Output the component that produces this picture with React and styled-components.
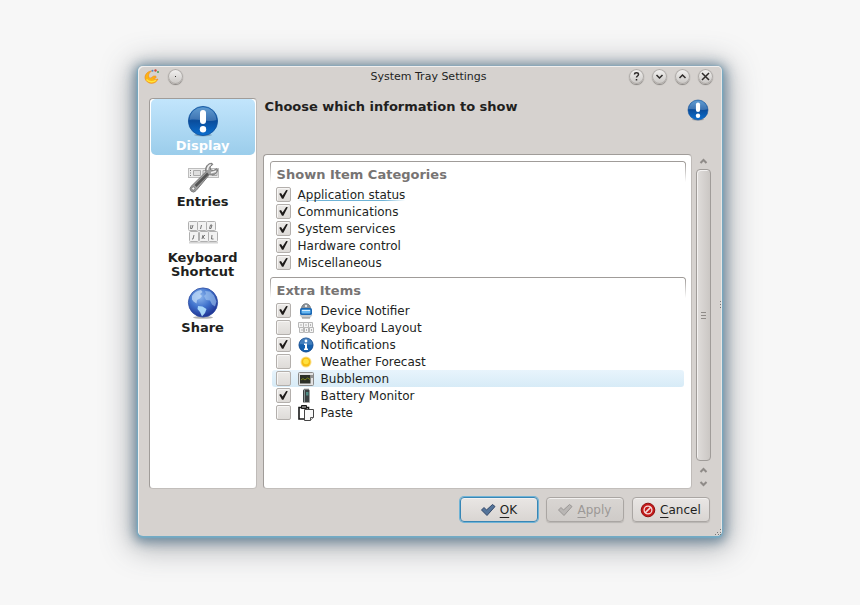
import React, {useState} from 'react';
import styled, {createGlobalStyle, css} from 'styled-components';

const windowColor = '#d6d2cf';
const textColor = '#221f1e';
const accentColor = '#6fb3d6';
const lineColor = '#a09c99';

const categories = [
  {id: 'status', label: 'Application status', checked: true, isFocused: true},
  {id: 'communications', label: 'Communications', checked: true},
  {id: 'services', label: 'System services', checked: true},
  {id: 'hardware', label: 'Hardware control', checked: true},
  {id: 'misc', label: 'Miscellaneous', checked: true}
];

// icons
const AlertIcon = ({size, id}) => (
  <svg width={size} height={size} viewBox="0 0 32 32" aria-hidden="true">
    <defs>
      <linearGradient id={id} x1="0" y1="0" x2="0" y2="1">
        <stop offset="0" stopColor="#3c86c8" />
        <stop offset="0.5" stopColor="#0a4d9c" />
        <stop offset="1" stopColor="#0b6fd0" />
      </linearGradient>
    </defs>
    <ellipse cx="16" cy="30" rx="9" ry="1.4" fill="#000" opacity="0.2" />
    <circle cx="16" cy="16" r="14.6" fill={`url(#${id})`} stroke="#0f4f9a" strokeWidth="0.8" />
    <path d="M2.500 15C3 7 9 2.400 16 2.400S29 7 29.500 15C21 18 11 13 2.500 15z" fill="#fff" opacity="0.2" />
    <rect x="13" y="5" width="6" height="14" rx="3" fill="#fff" />
    <circle cx="16" cy="24.300" r="3.200" fill="#fff" />
  </svg>
);

const WrenchIcon = () => (
  <svg width="32" height="32" viewBox="0 0 32 32" aria-hidden="true">
    <rect x="1.500" y="7.500" width="30" height="9" fill="#ececec" stroke="#bdbdbd" />
    <path d="M3 9.500h1M3 12h1M3 14.500h1" stroke="#777" />
    <path d="M6.500 9.500h7v5h-7zM16 9.500h4v5h-4zM27 9.500h3v5h-5" fill="#dedede" stroke="#aaa" />
    <path d="M4.300 30.300a3.400 3.400 0 0 1-.3-4.800L19 10.700c-1.300-4.500 1.400-8.400 6-8.400l.8 1.200-2.800 2.300.6 3 2.900.8 3.200-1.900.9 1.200c-.5 3.900-4.500 6-8.100 4.700L9 29.600a3.400 3.400 0 0 1-4.700.7z" fill="#a0a0a0" stroke="#777" />
    <path d="M8.500 25L21 12.500" stroke="#555" strokeWidth="2.600" />
    <path d="M20.500 9c0-2.500 1.300-4.300 3.300-5.300M24 11.700l5-1.500" fill="none" stroke="#f1f1f1" strokeWidth="1.500" />
    <circle cx="6.300" cy="27.500" r="1.600" fill="#f3f3f3" stroke="#666" strokeWidth="0.700" />
  </svg>
);

const KeysIcon = () => (
  <svg width="32" height="32" viewBox="0 0 32 32" aria-hidden="true">
    <path d="M2 25h29v1.500H2z" fill="#aaa" opacity="0.500" />
    <g fill="#f2f2f2" stroke="#b0b0b0">
      <rect x="1.500" y="4.500" width="9" height="9" rx="1" />
      <rect x="10.500" y="4.500" width="9" height="9" rx="1" />
      <rect x="19.500" y="4.500" width="9" height="9" rx="1" />
      <rect x="2.500" y="14.500" width="9" height="10" rx="1" />
      <rect x="12.500" y="14.500" width="9" height="10" rx="1" />
      <rect x="21.500" y="14.500" width="9" height="10" rx="1" />
    </g>
    <g fill="none" stroke="#666" strokeWidth="0.900">
      <path d="M4 8l-.5 3.500h1.500L6 8M14.500 8l-1 4M22.500 11.500l1-3.500h1.500l-1 3.500z" />
      <path d="M7 18l-1 4H5M16 18l-1 4M18 18l-2 2 1.500 2M25 18l-.5 4h2" />
    </g>
  </svg>
);

const GlobeIcon = () => (
  <svg width="32" height="32" viewBox="0 0 32 32" aria-hidden="true">
    <defs>
      <radialGradient id="globe" cx="0.400" cy="0.300" r="0.750">
        <stop offset="0" stopColor="#8fb8ee" />
        <stop offset="0.500" stopColor="#3f72cc" />
        <stop offset="1" stopColor="#1a2a8c" />
      </radialGradient>
    </defs>
    <ellipse cx="16" cy="30.500" rx="10" ry="1.300" fill="#000" opacity="0.300" />
    <circle cx="16" cy="15.500" r="14.600" fill="url(#globe)" stroke="#2c4aa0" strokeWidth="0.800" />
    <path d="M5 9c2-3.500 5-5.500 9-6l1.500 2-2.500 2 2 2-2 2.500-3 1.500-.5 3.500-3-2-1.500-2z" fill="#c2dbf7" opacity="0.750" />
    <path d="M18 4l5 .5 4 4 2.500 6-1.500 5-3-2-2-4-4-.5-2-4 2-2z" fill="#a5c8f2" opacity="0.600" />
    <path d="M11 19l4.500.5 4 2.500-1.500 4-3 3.500-2-4.500-2.500-3z" fill="#b4e2ff" opacity="0.900" />
  </svg>
);

const CheckMark = () => (
  <svg width="15" height="15" viewBox="0 0 15 15" aria-hidden="true">
    <path d="M3.200 6.800l1.800-.8 1.600 2.600L10.200 3l1.600.2-4.400 8.600H6z" fill="#1e1b1a" />
  </svg>
);

const DeviceIcon = () => (
  <svg width="16" height="16" viewBox="0 0 16 16" aria-hidden="true">
    <path d="M3.500 5.500a4.500 4.800 0 0 1 9 0z" fill="#8b9197" stroke="#7d848a" />
    <circle cx="8" cy="3" r="1.200" fill="#e8ecef" />
    <rect x="2" y="5" width="12" height="7" rx="1.500" fill="#1c68b4" />
    <rect x="3.500" y="6.500" width="9" height="4" rx="1" fill="#67b8f2" />
    <path d="M4 7.500h8" stroke="#d5edff" />
    <path d="M1.500 12h13L12 15H4z" fill="#c9cbcd" />
    <path d="M4 15h8" stroke="#888" />
  </svg>
);

const LayoutIcon = () => (
  <svg width="16" height="16" viewBox="0 0 16 16" aria-hidden="true">
    <g fill="#f4f4f4" stroke="#b8b8b8">
      <path d="M.5 2.500h5v5h-5zM5.500 2.500h5v5h-5zM10.500 2.500h4v5h-4z" />
      <path d="M1.500 7.500h4v5h-4zM6.500 7.500h4v5h-4zM11.500 7.500h4v5h-4z" />
    </g>
    <path d="M3 4v2M8 4v2M12.500 4v2M4 9v2M8.500 9v2M13.500 9v2" stroke="#999" strokeWidth="0.700" />
  </svg>
);

const InfoIcon = () => (
  <svg width="16" height="16" viewBox="0 0 16 16" aria-hidden="true">
    <circle cx="8" cy="8" r="7" fill="#1560ad" stroke="#0f4a92" />
    <path d="M1.500 7.500a6.500 6.500 0 0 1 13 0c-4 1.200-9-1-13 0z" fill="#fff" opacity="0.200" />
    <circle cx="8" cy="4" r="1.400" fill="#fff" />
    <path d="M6 6.500h3v5h1V13H6v-1.500h1V8H6z" fill="#fff" />
  </svg>
);

const WeatherIcon = () => (
  <svg width="16" height="16" viewBox="0 0 16 16" aria-hidden="true">
    <circle cx="8" cy="8" r="5.500" fill="#fbe08a" />
    <circle cx="8" cy="8" r="4.500" fill="#f6bd12" />
    <circle cx="8" cy="7.500" r="2.800" fill="#ffe13e" />
  </svg>
);

const BubbleIcon = () => (
  <svg width="16" height="16" viewBox="0 0 16 16" aria-hidden="true">
    <rect x="0.500" y="1.500" width="15" height="13" rx="1" fill="#e2e2e2" stroke="#8a8a8a" />
    <rect x="2" y="4" width="10.500" height="8.500" fill="#2c3028" />
    <path d="M3 9l2-1.500L7 9l2.500-2L12 8.500" fill="none" stroke="#7b8518" />
    <path d="M14 4v3" stroke="#444" />
  </svg>
);

const BatteryIcon = () => (
  <svg width="16" height="16" viewBox="0 0 16 16" aria-hidden="true">
    <rect x="6" y="0.500" width="5" height="2" fill="#bbb" />
    <rect x="5" y="1.500" width="6.500" height="13.500" rx="1" fill="#3a4042" />
    <path d="M6.500 2v12" stroke="#8b9798" />
    <path d="M8 4h2.500v3.500H8z" fill="#4d8a83" />
    <path d="M5 14.500h6.500" stroke="#aaa" />
  </svg>
);

const PasteIcon = () => (
  <svg width="16" height="16" viewBox="0 0 16 16" aria-hidden="true">
    <path d="M1 2.500h9.500V14H1z" fill="#fff" stroke="#171717" strokeWidth="1.600" />
    <path d="M3.500.5h5v3h-5z" fill="#777" stroke="#171717" />
    <path d="M6.500 4.500h9v8l-3 3h-6z" fill="#f9f9f9" stroke="#444" />
    <path d="M15.500 12.500h-3v3" fill="#ddd" stroke="#555" />
  </svg>
);

const TickIcon = ({fill, stroke}) => (
  <svg width="16" height="16" viewBox="0 0 16 16" aria-hidden="true">
    <path d="M1.500 8l2.500-2.500L6.500 8 12.500 2.500 15 4.500 7 13.500z" fill={fill} stroke={stroke} strokeLinejoin="round" />
  </svg>
);

const CancelIcon = () => (
  <svg width="16" height="16" viewBox="0 0 16 16" aria-hidden="true">
    <circle cx="8" cy="8" r="6.800" fill="#c41a1a" stroke="#8f1010" />
    <circle cx="8" cy="8" r="3.900" fill="none" stroke="#f4dcdc" strokeWidth="1.300" />
    <path d="M5 11l6-6" stroke="#f4dcdc" strokeWidth="1.700" />
  </svg>
);

const AppIcon = () => (
  <svg width="16" height="16" viewBox="0 0 16 16" aria-hidden="true">
    <path d="M7.500 2C2 2.500-.5 8 2 11.500c3 4 9.500 4 12-1.500-2.500 1-4 .5-4.200-1 2.500.8 3.200-1.500 1.500-2C8 6.500 8 10 5.500 9 3.800 7.500 4.500 4 7.500 2z" fill="#fdb414" stroke="#f08b1a" strokeWidth="0.700" />
    <path d="M2.500 10.500c2.500 3 7 3 9.500.5" fill="none" stroke="#ffe53d" strokeWidth="1.400" />
    <circle cx="8.500" cy="1.800" r="1" fill="#4d86c9" />
    <circle cx="11.500" cy="1.500" r="1.200" fill="#d14b39" />
    <circle cx="14" cy="3" r="1" fill="#4aa05a" />
  </svg>
);

const Arrow = ({isDown}) => (
  <svg width="15" height="13" viewBox="0 0 15 13" aria-hidden="true">
    <path d={isDown ? 'M4.500 6l3 3 3-3' : 'M4.500 9l3-3 3 3'} fill="none" stroke="#8f8b88" strokeWidth="2" />
  </svg>
);

const glyphs = {
  menu: <path d="M7.500 7v1" strokeWidth="1" />,
  help: <path d="M5.500 5.500c0-2.300 4-2.300 4 0 0 1.500-2 1.500-2 3M7.500 10v1.400" />,
  shade: <path d="M4.500 6l3 3 3-3" />,
  grow: <path d="M4.500 9l3-3 3 3" />,
  close: <path d="M4 4l7 7M11 4l-7 7" />
};

const TitleButton = ({name, label}) => (
  <RoundButton aria-label={label}>
    <svg width="15" height="15" viewBox="0 0 15 15" fill="none" stroke="#2e2b2a" strokeWidth="1.500" aria-hidden="true">
      {glyphs[name]}
    </svg>
  </RoundButton>
);

const pages = [
  {id: 'display', label: 'Display', icon: <AlertIcon size={32} id="alertBig" />},
  {id: 'entries', label: 'Entries', icon: <WrenchIcon />},
  {id: 'shortcut', label: 'Keyboard Shortcut', icon: <KeysIcon />},
  {id: 'share', label: 'Share', icon: <GlobeIcon />}
];

const extras = [
  {id: 'device', label: 'Device Notifier', icon: <DeviceIcon />, checked: true},
  {id: 'layout', label: 'Keyboard Layout', icon: <LayoutIcon />},
  {id: 'notifications', label: 'Notifications', icon: <InfoIcon />, checked: true},
  {id: 'weather', label: 'Weather Forecast', icon: <WeatherIcon />},
  {id: 'bubblemon', label: 'Bubblemon', icon: <BubbleIcon />, isHovered: true},
  {id: 'battery', label: 'Battery Monitor', icon: <BatteryIcon />, checked: true},
  {id: 'paste', label: 'Paste', icon: <PasteIcon />}
];

const ItemGroup = ({title, items}) => {
  const [checked, setChecked] = useState(() => items.filter(item => item.checked).map(item => item.id));

  const toggle = id => () => setChecked(
    checked.includes(id) ? checked.filter(item => item !== id) : [...checked, id]
  );

  return (
    <Group>
      <GroupTitle>{title}</GroupTitle>
      {items.map(item => (
        <Row key={item.id} $isHovered={item.isHovered}>
          <CheckWrapper>
            <CheckBox type="checkbox" checked={checked.includes(item.id)} onChange={toggle(item.id)} />
            {checked.includes(item.id) && <CheckMark />}
          </CheckWrapper>
          {item.icon}
          <RowLabel $isFocused={item.isFocused}>{item.label}</RowLabel>
        </Row>
      ))}
    </Group>
  );
};

export default function App() {
  const [activePage, setActivePage] = useState('display');

  return (
    <>
      <GlobalStyle />
      <Desktop>
        <Window>
          <TitleBar>
            <TitleSide>
              <AppIcon />
              <TitleButton name="menu" label="Menu" />
            </TitleSide>
            <WindowTitle>System Tray Settings</WindowTitle>
            <TitleSide $isRight>
              <TitleButton name="help" label="Help" />
              <TitleButton name="shade" label="Minimize" />
              <TitleButton name="grow" label="Maximize" />
              <TitleButton name="close" label="Close" />
            </TitleSide>
          </TitleBar>
          <Body>
            <Sidebar>
              {pages.map(page => (
                <PageButton
                  key={page.id}
                  $isActive={activePage === page.id}
                  onClick={() => setActivePage(page.id)}
                >
                  {page.icon}
                  <span>{page.label}</span>
                </PageButton>
              ))}
            </Sidebar>
            <Main>
              <Header>
                <Heading>Choose which information to show</Heading>
                <AlertIcon size={22} id="alertSmall" />
              </Header>
              <ScrollArea>
                <Panel>
                  <ItemGroup title="Shown Item Categories" items={categories} />
                  <ItemGroup title="Extra Items" items={extras} />
                </Panel>
                <ScrollBar>
                  <Arrow />
                  <Thumb><Grip /></Thumb>
                  <Arrow />
                  <Arrow isDown />
                </ScrollBar>
              </ScrollArea>
            </Main>
          </Body>
          <Footer>
            <DialogButton $isDefault>
              <TickIcon fill="#54749a" stroke="#34496a" />
              <span><u>O</u>K</span>
            </DialogButton>
            <DialogButton disabled>
              <TickIcon fill="#b9b6b4" stroke="#9a9795" />
              <span><u>A</u>pply</span>
            </DialogButton>
            <DialogButton>
              <CancelIcon />
              <span><u>C</u>ancel</span>
            </DialogButton>
          </Footer>
          <EdgeDots />
          <CornerGrip width="7" height="7" viewBox="0 0 7 7" aria-hidden="true">
            <path d="M5 0h1v1H5zM5 3h1v1H5zM2 3h1v1H2zM5 5h1v1H5zM3 5h1v1H3zM0 5h1v1H0z" fill="#777" />
          </CornerGrip>
        </Window>
      </Desktop>
    </>
  );
}

const GlobalStyle = createGlobalStyle`
  * {
    box-sizing: border-box;
  }
  body {
    margin: 0;
    background: #f7f7f7;
    color: ${textColor};
    font-family: 'DejaVu Sans', sans-serif;
    font-size: 12px;
  }
  button {
    font: inherit;
    color: inherit;
    padding: 0;
    cursor: pointer;
  }
  svg {
    display: block;
    flex: none;
  }
`;

const Desktop = styled.div`
  padding: 66px 16% 68px;
`;

const Window = styled.div`
  position: relative;
  padding: 0 11px 14px;
  background: ${windowColor};
  border-radius: 5px;
  box-shadow: inset 1px 1px 0 #f1efee, inset -1px 0 0 #e9e7e5,
    0 1px 2px 1px #72adc8, 0 2px 12px 4px rgba(66, 104, 130, 0.65),
    0 5px 30px 8px rgba(70, 74, 84, 0.4);
`;

const TitleBar = styled.header`
  display: flex;
  align-items: center;
  height: 21px;
  margin: 0 -4px 11px -5px;
`;

const TitleSide = styled.div`
  display: flex;
  flex: 1;
  gap: 8px;
  justify-content: ${({$isRight}) => $isRight ? 'flex-end' : 'flex-start'};
  padding-right: ${({$isRight}) => $isRight ? '2px' : '0'};
`;

const WindowTitle = styled.div`
  font-size: 11px;
`;

const RoundButton = styled.button`
  width: 15px;
  height: 15px;
  border: 0;
  border-radius: 50%;
  background: linear-gradient(#f4f3f2, #c9c6c3);
  box-shadow: inset 0 0 0 1px #b0aca9, 0 1px 1px #85817e;
`;

const Body = styled.div`
  display: flex;
  gap: 6px;
`;

const frame = css`
  background: #fff;
  border: 1px solid ${lineColor};
  border-right-color: #bfbbb8;
  border-bottom-color: #c2bebb;
  border-radius: 4px;
`;

const Sidebar = styled.nav`
  ${frame}
  width: 108px;
  padding: 0 1px;
`;

const PageButton = styled.button`
  display: flex;
  flex-direction: column;
  align-items: center;
  gap: 2px;
  width: 100%;
  padding: 6px 16px 2px;
  border: 0;
  border-radius: 5px;
  background: ${({$isActive}) => $isActive ? 'linear-gradient(#c2e5fc, #9bcdeb)' : 'none'};
  color: ${({$isActive}) => $isActive ? '#fff' : textColor};
  font-weight: bold;
  font-size: 13px;
  line-height: 14px;
`;

const Main = styled.main`
  flex: 1;
  min-width: 0;
`;

const Header = styled.div`
  display: flex;
  justify-content: space-between;
  height: 56px;
  padding: 1px 2px 0;
`;

const Heading = styled.h1`
  margin: 0;
  font-size: 13px;
  line-height: 16px;
`;

const ScrollArea = styled.div`
  display: flex;
  gap: 4px;
`;

const Panel = styled.div`
  ${frame}
  flex: 1;
  padding: 6px 5px 61px 6px;
`;

const Group = styled.section`
  position: relative;
  padding: 1px 2px 6px;
  &::before {
    content: '';
    position: absolute;
    inset: 0 0 auto;
    height: 20px;
    border: 1px solid ${lineColor};
    border-bottom: 0;
    border-radius: 3px 3px 0 0;
    mask-image: linear-gradient(#000 10%, transparent);
    pointer-events: none;
  }
`;

const GroupTitle = styled.h2`
  margin: 0;
  padding: 5px 5px 3px;
  color: #777473;
  font-size: 13px;
  line-height: 16px;
`;

const Row = styled.label`
  display: flex;
  align-items: center;
  gap: 7px;
  height: 17px;
  padding: 0 4px;
  border-radius: 3px;
  background: ${({$isHovered}) => $isHovered ? 'linear-gradient(#e8f4fc, #d7ebf7)' : 'none'};
`;

const RowLabel = styled.span`
  align-self: flex-end;
  line-height: 15px;
  ${({$isFocused}) => $isFocused && css`
    background: linear-gradient(90deg, transparent, ${accentColor} 20% 80%, transparent) 0 12px / 100% 1px no-repeat;
  `}
`;

const CheckWrapper = styled.span`
  display: grid;
  & > * {
    grid-area: 1 / 1;
  }
  & > svg {
    pointer-events: none;
    z-index: 1;
  }
`;

const CheckBox = styled.input`
  appearance: none;
  width: 15px;
  height: 15px;
  margin: 0;
  border: 1px solid #b3afac;
  border-radius: 2px;
  background: linear-gradient(#eceae8, #dedbd8);
  box-shadow: inset 1px 1px 0 #f7f6f5;
`;

const ScrollBar = styled.div`
  display: flex;
  flex-direction: column;
  width: 15px;
`;

const Thumb = styled.div`
  display: flex;
  flex: 1;
  align-items: center;
  justify-content: center;
  margin: 2px 0;
  border: 1px solid ${lineColor};
  border-radius: 4px;
  background: linear-gradient(90deg, #e0dddb, #cbc7c4);
  box-shadow: inset 1px 1px 0 #f3f1f0;
`;

const Grip = styled.div`
  width: 5px;
  height: 7px;
  background: repeating-linear-gradient(#8f8b88 0 1px, transparent 1px 3px);
`;

const Footer = styled.footer`
  display: flex;
  justify-content: flex-end;
  gap: 8px;
  padding: 8px 1px 0;
`;

const DialogButton = styled.button`
  display: flex;
  align-items: center;
  justify-content: center;
  gap: 4px;
  width: 78px;
  height: 25px;
  padding-right: 2px;
  border: 1px solid ${({$isDefault}) => $isDefault ? '#3886b5' : '#aaa6a3'};
  border-radius: 4px;
  background: linear-gradient(#e9e6e4, #d9d5d2);
  box-shadow: ${({$isDefault}) => $isDefault ? `0 0 0 1px ${accentColor}` : '0 1px 1px #b9b5b2'}, inset 0 1px 0 #f3f1f0;
  u {
    text-underline-offset: 3px;
  }
  &:disabled {
    color: #9c9896;
    background: linear-gradient(#d9d6d3, #cfcbc8);
    cursor: default;
  }
`;

const EdgeDots = styled.div`
  position: absolute;
  top: 50%;
  right: 1px;
  width: 1px;
  height: 7px;
  background: repeating-linear-gradient(#777 0 1px, transparent 1px 3px);
`;

const CornerGrip = styled.svg`
  position: absolute;
  right: 0;
  bottom: 0;
`;
